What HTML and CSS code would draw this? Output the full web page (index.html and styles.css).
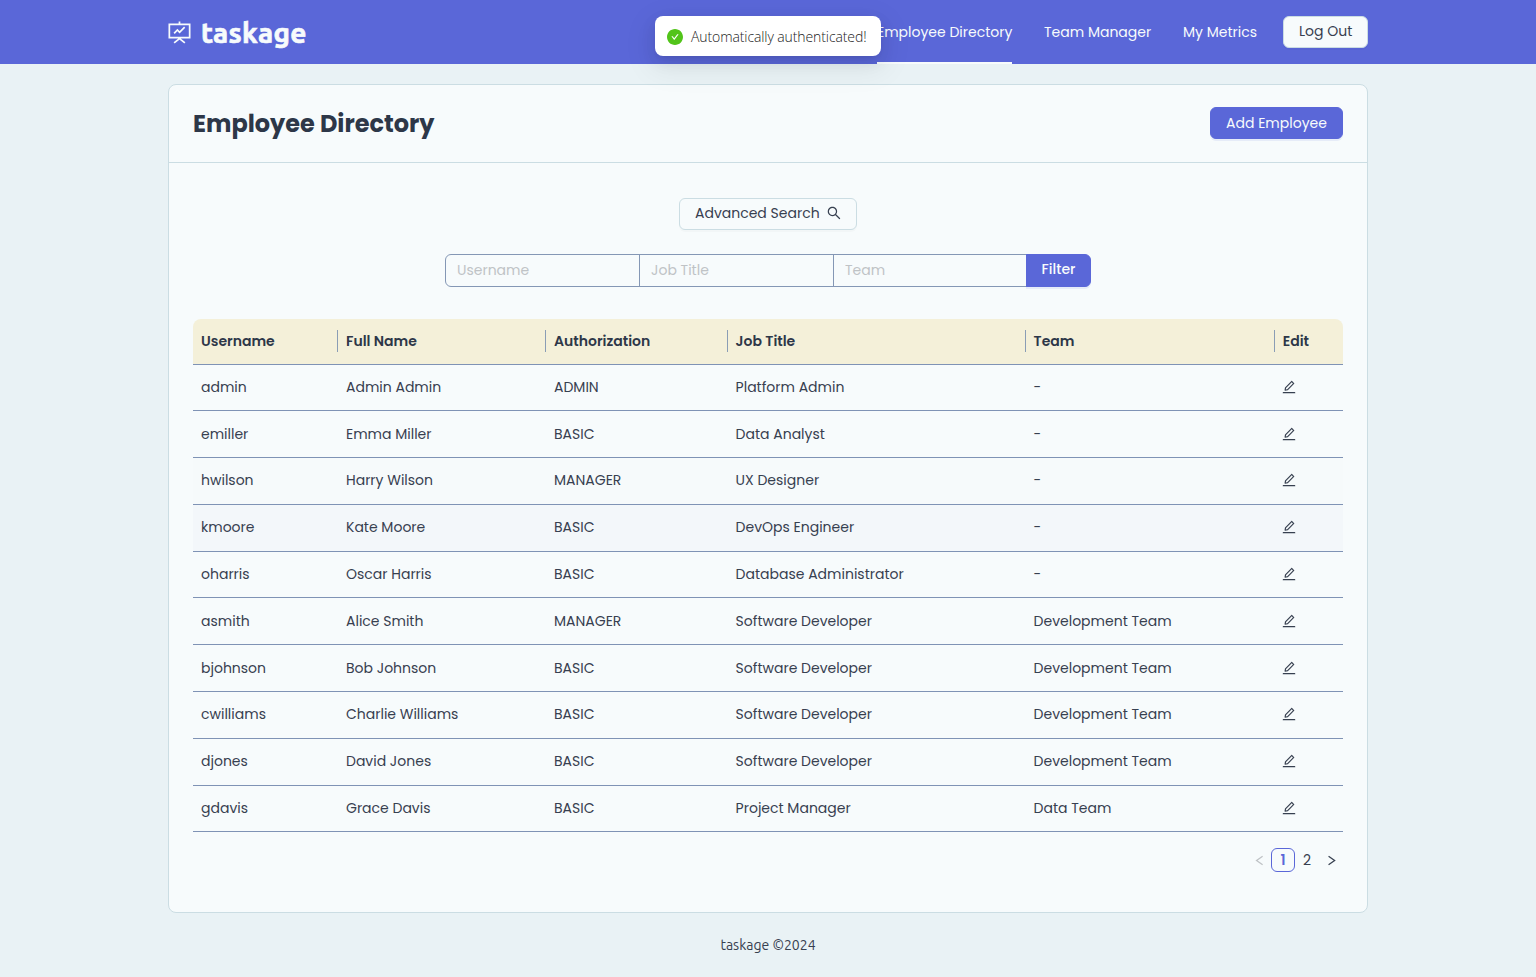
FILE: index.html
```html
<!DOCTYPE html>
<html lang="en">
<head>
<meta charset="utf-8">
<title>taskage</title>
<link rel="stylesheet" href="styles.css">
</head>
<body>
<svg class="sprite" aria-hidden="true">
  <symbol id="edit" viewBox="64 64 896 896"><path d="M257.7 752c2 0 4-.2 6-.5L431.9 722c2-.4 3.9-1.3 5.3-2.8l423.9-423.9a9.96 9.96 0 000-14.1L694.9 114.9c-1.9-1.9-4.4-2.9-7.1-2.9s-5.2 1-7.1 2.9L256.8 538.8c-1.5 1.5-2.4 3.3-2.8 5.3l-29.5 168.2a33.5 33.5 0 009.4 29.8c6.6 6.4 14.9 9.9 23.8 9.9zm67.4-174.4L687.8 215l73.3 73.3-362.7 362.6-88.9 15.7 15.6-89zM880 836H144c-17.7 0-32 14.3-32 32v36c0 4.4 3.6 8 8 8h784c4.4 0 8-3.6 8-8v-36c0-17.7-14.3-32-32-32z"/></symbol>
</svg>
<header class="topbar">
  <div class="topbar-inner">
    <div class="brand">
      <svg class="brand-icon" viewBox="0 0 24 24" fill="none" stroke="currentColor" stroke-width="1.8"><path d="M12 .4v3M1.4 3.5h21.2v13.8H1.4zM6.4 22.8l5.6-4.5 5.6 4.5M6.4 12.9l3.4-3.6 2.3 2.5 5.3-5.4"/></svg>
      <span class="brand-name">taskage</span>
    </div>
    <nav class="nav">
      <a class="nav-item active">Employee Directory</a>
      <a class="nav-item team">Team Manager</a>
      <a class="nav-item metrics">My Metrics</a>
      <button class="btn logout">Log Out</button>
    </nav>
  </div>
</header>
<div class="toast">
  <svg class="toast-icon" viewBox="64 64 896 896"><path d="M512 64C264.6 64 64 264.6 64 512s200.6 448 448 448 448-200.6 448-448S759.4 64 512 64zm193.5 301.7l-210.6 292a31.8 31.8 0 01-51.7 0L318.5 484.9c-3.8-5.3 0-12.7 6.5-12.7h46.9c10.2 0 19.9 4.9 25.9 13.3l71.2 98.8 157.2-218c6-8.3 15.6-13.3 25.9-13.3H699c6.5 0 10.3 7.4 6.5 12.7z"/></svg>
  <span>Automatically authenticated!</span>
</div>
<main class="card">
  <div class="card-head">
    <h1>Employee Directory</h1>
    <button class="btn primary add">Add Employee</button>
  </div>
  <div class="card-body">
    <button class="btn advanced">Advanced Search
      <svg class="icon" viewBox="64 64 896 896"><path d="M909.6 854.5L649.9 594.8C690.2 542.7 712 479 712 412c0-80.2-31.3-155.4-87.9-212.1-56.6-56.7-132-87.9-212.1-87.9s-155.5 31.3-212.1 87.9C143.2 256.5 112 331.8 112 412c0 80.1 31.3 155.5 87.9 212.1C256.5 680.8 331.8 712 412 712c67 0 130.6-21.8 182.7-62l259.7 259.6a8.2 8.2 0 0011.6 0l43.6-43.5a8.2 8.2 0 000-11.6zM570.4 570.4C528 612.7 471.8 636 412 636s-116-23.3-158.4-65.6C211.3 528 188 471.8 188 412s23.3-116.1 65.6-158.4C296 211.3 352.2 188 412 188s116.1 23.2 158.4 65.6S636 352.2 636 412s-23.3 116.1-65.6 158.4z"/></svg>
    </button>
    <div class="filters">
      <input placeholder="Username"><input placeholder="Job Title"><input placeholder="Team">
      <button class="btn primary filter">Filter</button>
    </div>
    <table>
      <colgroup><col class="c1"><col class="c2"><col class="c3"><col class="c4"><col class="c5"><col class="c6"></colgroup>
      <thead><tr><th>Username</th><th>Full Name</th><th>Authorization</th><th>Job Title</th><th>Team</th><th>Edit</th></tr></thead>
      <tbody>
        <tr><td>admin</td><td>Admin Admin</td><td>ADMIN</td><td>Platform Admin</td><td>-</td><td><svg class="icon"><use href="#edit"/></svg></td></tr>
        <tr><td>emiller</td><td>Emma Miller</td><td>BASIC</td><td>Data Analyst</td><td>-</td><td><svg class="icon"><use href="#edit"/></svg></td></tr>
        <tr class="fading"><td>hwilson</td><td>Harry Wilson</td><td>MANAGER</td><td>UX Designer</td><td>-</td><td><svg class="icon"><use href="#edit"/></svg></td></tr>
        <tr class="hovered"><td>kmoore</td><td>Kate Moore</td><td>BASIC</td><td>DevOps Engineer</td><td>-</td><td><svg class="icon"><use href="#edit"/></svg></td></tr>
        <tr><td>oharris</td><td>Oscar Harris</td><td>BASIC</td><td>Database Administrator</td><td>-</td><td><svg class="icon"><use href="#edit"/></svg></td></tr>
        <tr><td>asmith</td><td>Alice Smith</td><td>MANAGER</td><td>Software Developer</td><td>Development Team</td><td><svg class="icon"><use href="#edit"/></svg></td></tr>
        <tr><td>bjohnson</td><td>Bob Johnson</td><td>BASIC</td><td>Software Developer</td><td>Development Team</td><td><svg class="icon"><use href="#edit"/></svg></td></tr>
        <tr><td>cwilliams</td><td>Charlie Williams</td><td>BASIC</td><td>Software Developer</td><td>Development Team</td><td><svg class="icon"><use href="#edit"/></svg></td></tr>
        <tr><td>djones</td><td>David Jones</td><td>BASIC</td><td>Software Developer</td><td>Development Team</td><td><svg class="icon"><use href="#edit"/></svg></td></tr>
        <tr><td>gdavis</td><td>Grace Davis</td><td>BASIC</td><td>Project Manager</td><td>Data Team</td><td><svg class="icon"><use href="#edit"/></svg></td></tr>
      </tbody>
    </table>
    <div class="pager">
      <span class="page off"><svg viewBox="0 0 12 12"><path d="M9.4 1.4 2.8 6 9.4 10.6"/></svg></span>
      <span class="page current">1</span>
      <span class="page">2</span>
      <span class="page"><svg viewBox="0 0 12 12"><path d="M2.8 1.4 9.4 6 2.8 10.6"/></svg></span>
    </div>
  </div>
</main>
<footer>taskage ©2024</footer>
</body>
</html>
```
FILE: styles.css
```css
* { box-sizing: border-box; }
body {
  margin: 0;
  height: 977px;
  overflow: hidden;
  background: #e9f2f5;
  color: #374050;
  font: 14px/22px Poppins, Inter, "Liberation Sans", sans-serif;
}
.sprite { display: none; }
.topbar { height: 64px; background: #5a67d8; color: #f7fbfc; }
.topbar-inner {
  width: 1200px; height: 64px; margin: 0 auto;
  display: flex; justify-content: space-between; align-items: center;
}
.brand { display: flex; align-items: center; gap: 10px; }
.brand-icon { width: 23px; height: 23px; }
.brand-name { font: 700 28px/42px Ubuntu, "Noto Sans", sans-serif; letter-spacing: 0.35px; padding-top: 1px; -webkit-text-stroke: 0.7px currentColor; }
.nav { display: flex; align-items: center; height: 64px; }
.nav-item { height: 64px; line-height: 64px; margin-right: 32px; white-space: nowrap; }
.nav-item.active { width: 135px; border-bottom: 2px solid #f7fbfc; }
.nav-item.team { width: 107px; }
.nav-item.metrics { width: 74px; margin-right: 26px; }
.btn {
  height: 32px; padding: 0 15px 2px;
  border: 1px solid #cbdde3; border-radius: 6px;
  background: #f7fbfc; color: #374050;
  font: inherit; white-space: nowrap;
  box-shadow: 0 2px 0 rgba(0, 0, 0, 0.02);
}
.btn.primary { background: #5a67d8; border-color: #5a67d8; color: #f7fbfc; box-shadow: 0 2px 0 rgba(90, 103, 216, 0.1); }
.logout { width: 85px; }
.btn.add { width: 133px; margin-bottom: 1px; padding-bottom: 1px; }
.toast {
  position: absolute; left: 655px; top: 16px; width: 226px; height: 40px;
  display: flex; align-items: center; padding: 1px 12px 0; gap: 8px;
  background: #fff; border-radius: 8px; white-space: nowrap; color: #222;
  font: 300 14px/22px "Open Sans", "Noto Sans", sans-serif; letter-spacing: -0.1px;
  box-shadow: 0 6px 16px rgba(0,0,0,.08), 0 3px 6px -4px rgba(0,0,0,.12), 0 9px 28px 8px rgba(0,0,0,.05);
}
.toast-icon { flex: none; width: 16px; height: 16px; fill: #52c41a; }
.card {
  width: 1200px; height: 829px; margin: 20px auto 0;
  background: #f7fbfc; border: 1px solid #cbdde3; border-radius: 8px;
}
.card-head {
  height: 78px; padding: 0 24px; border-bottom: 1px solid #cbdde3;
  display: flex; align-items: center; justify-content: space-between;
}
h1 { margin: 0; font-size: 24px; line-height: 36px; font-weight: 700; white-space: nowrap; color: #2d3748; }
.card-body { padding: 35px 24px 0; display: flex; flex-direction: column; }
.advanced { align-self: center; width: 178px; display: flex; align-items: center; justify-content: space-between; }
.icon { width: 14px; height: 14px; fill: currentColor; display: block; }
td .icon { margin-left: -1px; }
.filters { align-self: center; display: flex; width: 646px; margin-top: 24px; }
.filters input {
  width: 195px; height: 32.5px; margin: 0 -1px 0 0; padding: 0 11px;
  border: 1px solid #8497b5; background: transparent;
  font: inherit; color: inherit; border-radius: 0;
}
.filters input:first-child { border-radius: 6px 0 0 6px; }
.filters input::placeholder { color: #bfc3c6; opacity: 1; }
.btn.filter { flex: 1; height: 32.5px; margin-left: -1px; border-radius: 0 6px 6px 0; font-weight: 500; padding: 0 0 2px; position: relative; }
table { width: 1150px; margin-top: 32px; table-layout: fixed; border-collapse: separate; border-spacing: 0; }
.c1 { width: 145px; } .c2 { width: 208px; } .c3 { width: 181.6px; }
.c4 { width: 298px; } .c5 { width: 249.2px; } .c6 { width: 68.2px; }
th, td { height: 46.8px; padding: 0 8px 1px; text-align: left; border-bottom: 1px solid #7f93b5; white-space: nowrap; }
th { height: 46px; background: #f4f0d9; font-weight: 600; position: relative; color: #2d3748; }
th:first-child { border-top-left-radius: 8px; }
th:last-child { border-top-right-radius: 8px; }
th:not(:last-child)::after { content: ""; position: absolute; right: 0; top: 11px; width: 1px; height: 22px; background: #8a9db5; }
.fading td { background: #f6fafb; }
.hovered td { background: #f3f7fa; }
.pager { display: flex; justify-content: flex-end; margin-top: 15.4px; }
.page { width: 24px; height: 24px; border: 1px solid transparent; border-radius: 6px; display: flex; align-items: center; justify-content: center; }
.page svg { width: 11px; height: 11px; margin-top: 1px; fill: none; stroke: currentColor; stroke-width: 1.4; }
.current { border-color: #5a67d8; color: #5a67d8; font-weight: 600; }
.off { color: #bfc3c6; }
footer { margin-top: 21px; text-align: center; font: 14px/22px Ubuntu, "Noto Sans", sans-serif; }
```
